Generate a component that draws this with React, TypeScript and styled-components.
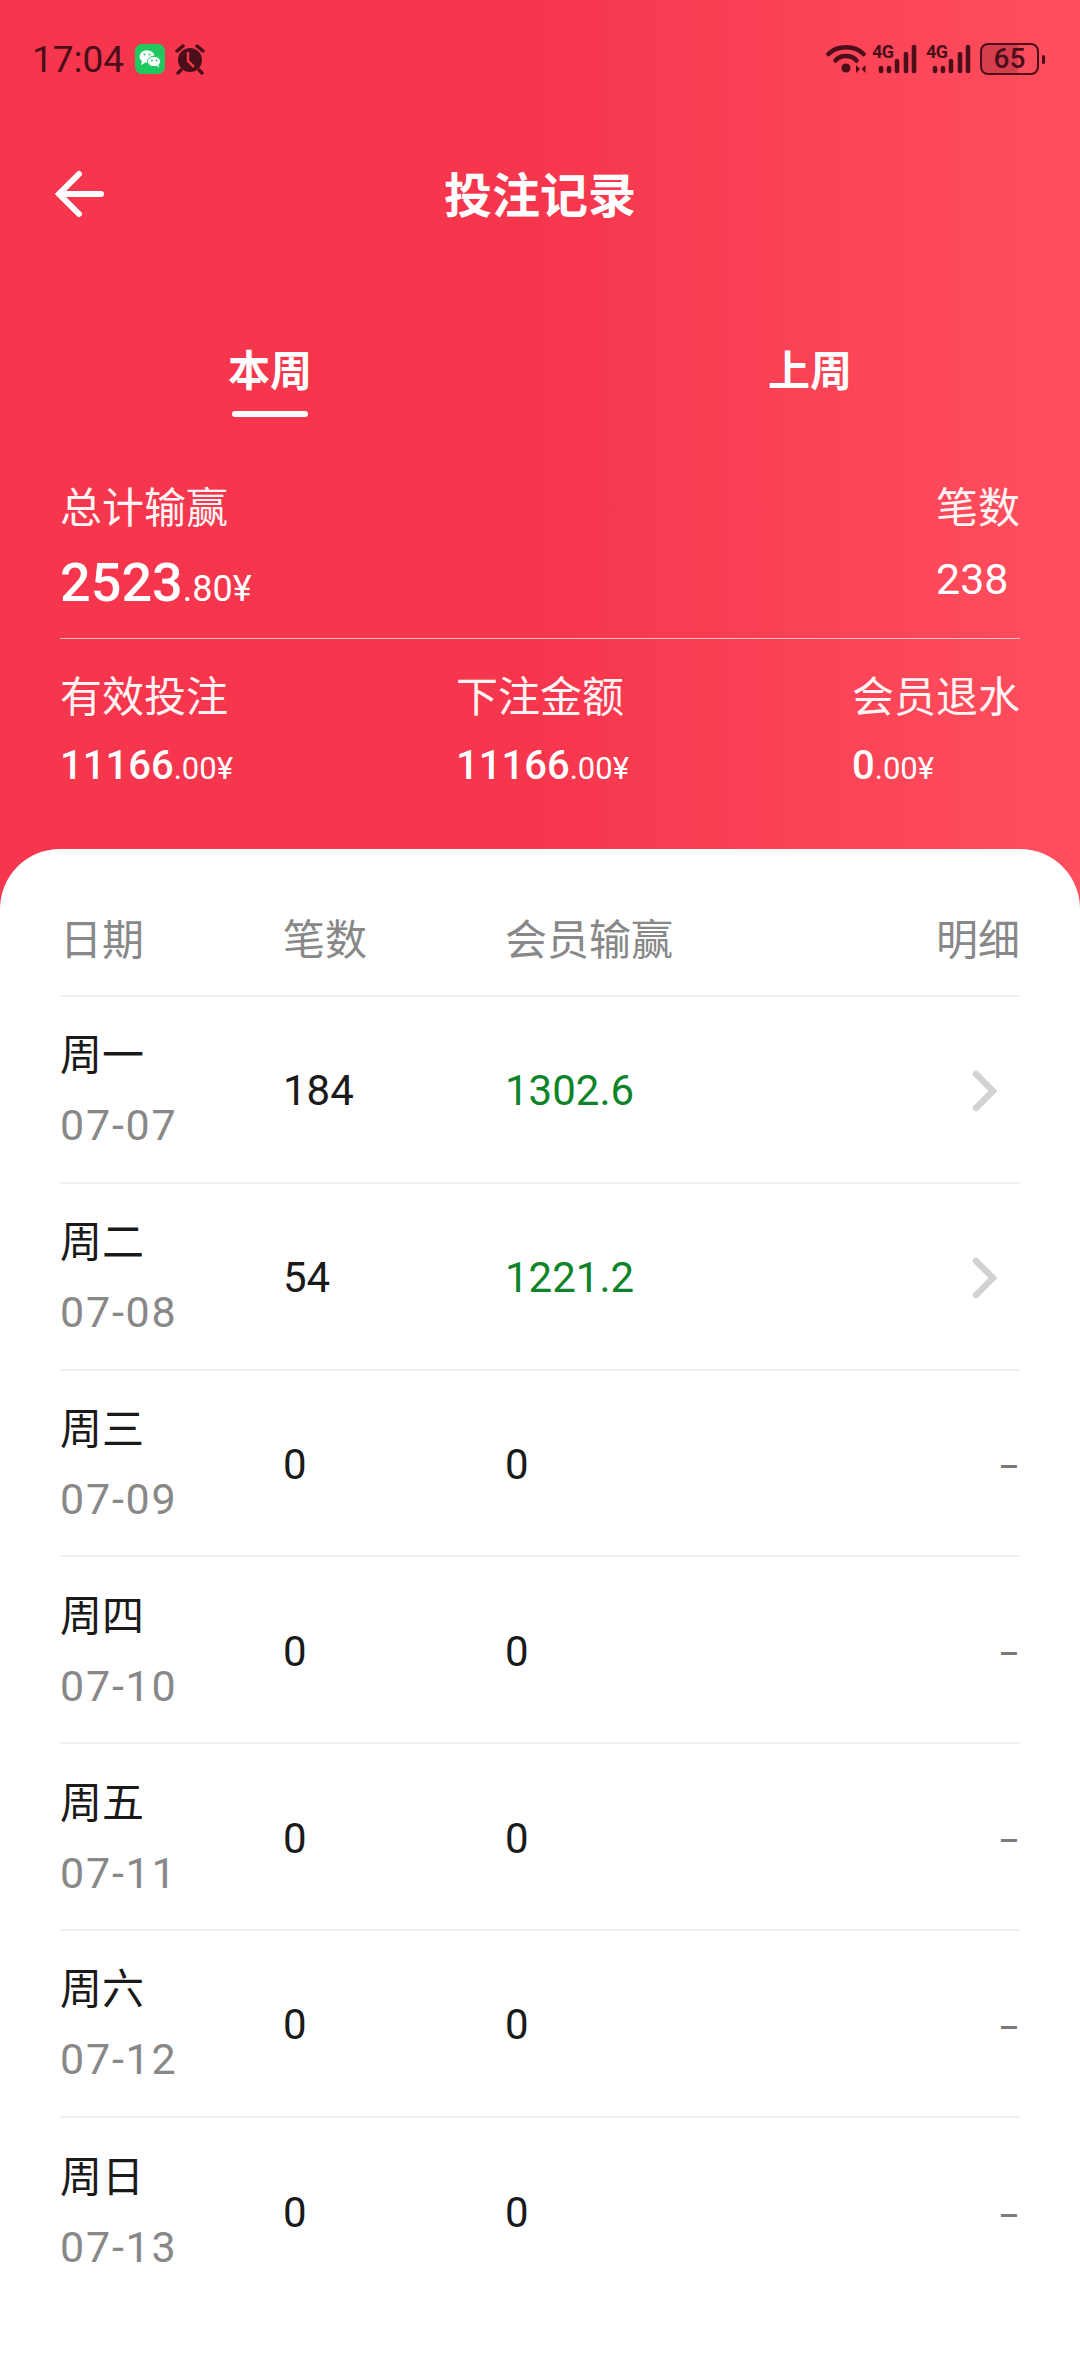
import React from "react";
import styled, { createGlobalStyle } from "styled-components";

const Global = createGlobalStyle`
  html, body {
    margin: 0;
    padding: 0;
    background: #fff;
  }
  body {
    font-family: Roboto, "Noto Sans CJK SC", sans-serif;
  }
  * { box-sizing: border-box; }
`;

const Page = styled.div`
  width: 1080px;
  height: 2376px;
  overflow: hidden;
  background: linear-gradient(90deg, #f6364d 0%, #f6364d 50%, #ff4f5e 100%);
  display: flex;
  flex-direction: column;
`;

const StatusBar = styled.div`
  height: 60px;
  margin-top: 29px;
  padding: 0 35px 0 32px;
  display: flex;
  align-items: center;
  justify-content: space-between;
  color: #4a0f1a;
`;

const StatusGroup = styled.div`
  display: flex;
  align-items: center;
`;

const Clock = styled.span`
  font-size: 37px;
  width: 103px;
`;

const SignalBox = styled.div`
  position: relative;
  width: 48px;
  height: 30px;
  margin-left: 6px;
`;

const FourG = styled.span`
  position: absolute;
  left: 0;
  top: -1px;
  font-size: 18px;
  font-weight: 700;
  line-height: 18px;
  letter-spacing: -0.5px;
`;

const Battery = styled.div`
  width: 59px;
  height: 32px;
  margin-left: 6px;
  border: 2.5px solid #4a0f1a;
  border-radius: 8px;
  font-size: 28px;
  font-weight: 500;
  line-height: 27px;
  text-align: center;
  background: linear-gradient(90deg, rgba(74, 15, 26, 0.22) 65%, transparent 65%);
`;

const BatteryTip = styled.div`
  width: 3px;
  height: 9px;
  margin-left: 3px;
  background: #4a0f1a;
  border-radius: 2px;
`;

const TopBar = styled.div`
  height: 72px;
  margin-top: 67px;
  display: flex;
  align-items: center;
  justify-content: center;
  position: relative;
`;

const BackIcon = styled.svg`
  position: absolute;
  left: 54px;
  top: 13px;
`;

const Title = styled.h1`
  margin: 0;
  font-size: 48px;
  font-weight: 700;
  color: #fff;
`;

const Tabs = styled.div`
  display: grid;
  grid-template-columns: 540px 540px;
  margin-top: 114px;
`;

const Tab = styled.div`
  display: flex;
  flex-direction: column;
  align-items: center;
  color: #fff;
  font-size: 42px;
  font-weight: 700;
  line-height: 60px;
`;

const TabLine = styled.div<{ $active?: boolean }>`
  width: 76px;
  height: 6px;
  margin-top: 9px;
  border-radius: 3px;
  background: ${({ $active }) => ($active ? "#fff" : "transparent")};
`;

const Summary = styled.div`
  padding: 0 60px;
  margin-top: 64px;
  color: #fff;
`;

const SummaryRow = styled.div`
  display: flex;
  justify-content: space-between;
`;

const Stat = styled.div`
  display: flex;
  flex-direction: column;
`;

const StatLabel = styled.span`
  font-size: 42px;
  line-height: 56px;
  color: #fff3f3;
`;

const BigValue = styled.span`
  font-size: 54px;
  font-weight: 500;
  line-height: 60px;
  margin-top: 16px;
`;

const Count = styled.span`
  font-size: 43px;
  line-height: 60px;
  margin-top: 12px;
`;

const MidValue = styled.span`
  font-size: 40px;
  font-weight: 500;
  line-height: 50px;
  margin-top: 15px;
`;

const Small = styled.small<{ $size: number }>`
  font-size: ${({ $size }) => $size}px;
  font-weight: 400;
`;

const Rule = styled.div`
  height: 1px;
  margin: 19px 0 31px;
  background: rgba(255, 255, 255, 0.65);
`;

const Sheet = styled.div`
  flex: 1;
  margin-top: 55px;
  padding: 0 60px;
  background: #fff;
  border-radius: 60px 60px 0 0;
`;

const Row = styled.div<{ $head?: boolean }>`
  display: grid;
  grid-template-columns: 223px 222px 1fr 60px;
  align-items: center;
  height: ${({ $head }) => ($head ? "148px" : "186.8px")};
  padding-top: ${({ $head }) => ($head ? "28px" : "3px")};
  border-bottom: 2px solid #f0f0f0;
  &:last-child {
    border-bottom: 0;
  }
`;

const Head = styled.span<{ $end?: boolean }>`
  font-size: 42px;
  color: #888;
  white-space: nowrap;
  justify-self: ${({ $end }) => ($end ? "end" : "start")};
`;

const DateCell = styled.div`
  display: flex;
  flex-direction: column;
`;

const Day = styled.span`
  font-size: 42px;
  line-height: 56px;
  color: #1a1a1a;
`;

const DateText = styled.span`
  font-size: 43px;
  line-height: 56px;
  margin-top: 13px;
  letter-spacing: 1.8px;
  color: #888;
`;

const Cell = styled.span<{ $win?: boolean }>`
  font-size: 42px;
  color: ${({ $win }) => ($win ? "#0e842a" : "#1a1a1a")};
`;

const Arrow = styled.svg`
  justify-self: end;
  margin-right: 23px;
`;

const Dash = styled.span`
  justify-self: end;
  margin: 6px 1px 0 0;
  font-size: 32px;
  font-weight: 500;
  color: #7a7a7a;
`;

const rows = [
  { day: "周一", date: "07-07", count: "184", win: "1302.6", detail: true },
  { day: "周二", date: "07-08", count: "54", win: "1221.2", detail: true },
  { day: "周三", date: "07-09", count: "0", win: "0" },
  { day: "周四", date: "07-10", count: "0", win: "0" },
  { day: "周五", date: "07-11", count: "0", win: "0" },
  { day: "周六", date: "07-12", count: "0", win: "0" },
  { day: "周日", date: "07-13", count: "0", win: "0" },
];

function Signal() {
  return (
    <SignalBox>
      <svg width="48" height="30" viewBox="0 0 48 30" style={{ position: "absolute", left: 0, top: 0 }}>
        <path
          d="M9 24v3M17 24v3M25 17v10M34 10v17M42 3v24"
          fill="none"
          stroke="#4a0f1a"
          strokeWidth="4.6"
          strokeLinecap="round"
        />
      </svg>
      <FourG>4G</FourG>
    </SignalBox>
  );
}

export default function App() {
  return (
    <Page>
      <Global />
      <StatusBar>
        <StatusGroup>
          <Clock>17:04</Clock>
          <svg width="30" height="30" viewBox="0 0 30 30">
            <rect width="30" height="30" rx="7" fill="#1fc95f" />
            <ellipse cx="12" cy="12.5" rx="7.5" ry="6.3" fill="#fff" />
            <path d="M7 17l-1 4 4-2z" fill="#fff" />
            <ellipse cx="19" cy="17.5" rx="6.5" ry="5.2" fill="#fff" stroke="#1fc95f" strokeWidth="1" />
            <path d="M22 21.5l2 2.5-.4-3.5z" fill="#fff" />
            <circle cx="9.5" cy="10.5" r="1" fill="#1fc95f" />
            <circle cx="14.5" cy="10.5" r="1" fill="#1fc95f" />
            <circle cx="17" cy="16.5" r=".9" fill="#1fc95f" />
            <circle cx="21.5" cy="16.5" r=".9" fill="#1fc95f" />
          </svg>
          <svg width="32" height="32" viewBox="0 0 32 32" style={{ marginLeft: 9 }}>
            <circle cx="16" cy="17" r="12" fill="#4a0f1a" />
            <path d="M14 9v9l6 6" fill="none" stroke="#f6364d" strokeWidth="2.5" />
            <path d="M3 8l6-5M29 8l-6-5M7 27l-3 3M25 27l3 3" stroke="#4a0f1a" strokeWidth="3.4" strokeLinecap="round" />
          </svg>
        </StatusGroup>
        <StatusGroup>
          <svg width="40" height="30" viewBox="0 0 40 30">
            <g fill="none" stroke="#4a0f1a" strokeWidth="4.5" strokeLinecap="round">
              <path d="M2.5 10C11 1 29 1 37.5 10" />
              <path d="M9.5 16.5C14.5 10.5 25.5 10.5 30.5 16.5" />
            </g>
            <circle cx="20" cy="24" r="4.6" fill="#4a0f1a" />
            <path d="M34 25l-4-4v8zM35.5 25l4-4v8z" fill="#4a0f1a" />
          </svg>
          <Signal />
          <Signal />
          <Battery>65</Battery>
          <BatteryTip />
        </StatusGroup>
      </StatusBar>

      <TopBar>
        <BackIcon width="50" height="50" viewBox="0 0 50 50">
          <path
            d="M47 25H5M25 5L5 25l20 20"
            fill="none"
            stroke="#fff"
            strokeWidth="6"
            strokeLinecap="round"
            strokeLinejoin="miter"
          />
        </BackIcon>
        <Title>投注记录</Title>
      </TopBar>

      <Tabs>
        <Tab>
          本周
          <TabLine $active />
        </Tab>
        <Tab>
          上周
          <TabLine />
        </Tab>
      </Tabs>

      <Summary>
        <SummaryRow>
          <Stat>
            <StatLabel>总计输赢</StatLabel>
            <BigValue>
              2523<Small $size={36}>.80¥</Small>
            </BigValue>
          </Stat>
          <Stat>
            <StatLabel>笔数</StatLabel>
            <Count>238</Count>
          </Stat>
        </SummaryRow>
        <Rule />
        <SummaryRow>
          <Stat>
            <StatLabel>有效投注</StatLabel>
            <MidValue>
              11166<Small $size={31}>.00¥</Small>
            </MidValue>
          </Stat>
          <Stat>
            <StatLabel>下注金额</StatLabel>
            <MidValue>
              11166<Small $size={31}>.00¥</Small>
            </MidValue>
          </Stat>
          <Stat>
            <StatLabel>会员退水</StatLabel>
            <MidValue>
              0<Small $size={31}>.00¥</Small>
            </MidValue>
          </Stat>
        </SummaryRow>
      </Summary>

      <Sheet>
        <Row $head>
          <Head>日期</Head>
          <Head>笔数</Head>
          <Head>会员输赢</Head>
          <Head $end>明细</Head>
        </Row>
        {rows.map((r) => (
          <Row key={r.date}>
            <DateCell>
              <Day>{r.day}</Day>
              <DateText>{r.date}</DateText>
            </DateCell>
            <Cell>{r.count}</Cell>
            <Cell $win={r.detail}>{r.win}</Cell>
            {r.detail ? (
              <Arrow width="26" height="44" viewBox="0 0 26 44">
                <path d="M5 5l17 17L5 39" fill="none" stroke="#d2d2d2" strokeWidth="6.5" strokeLinecap="round" />
              </Arrow>
            ) : (
              <Dash>–</Dash>
            )}
          </Row>
        ))}
      </Sheet>
    </Page>
  );
}
